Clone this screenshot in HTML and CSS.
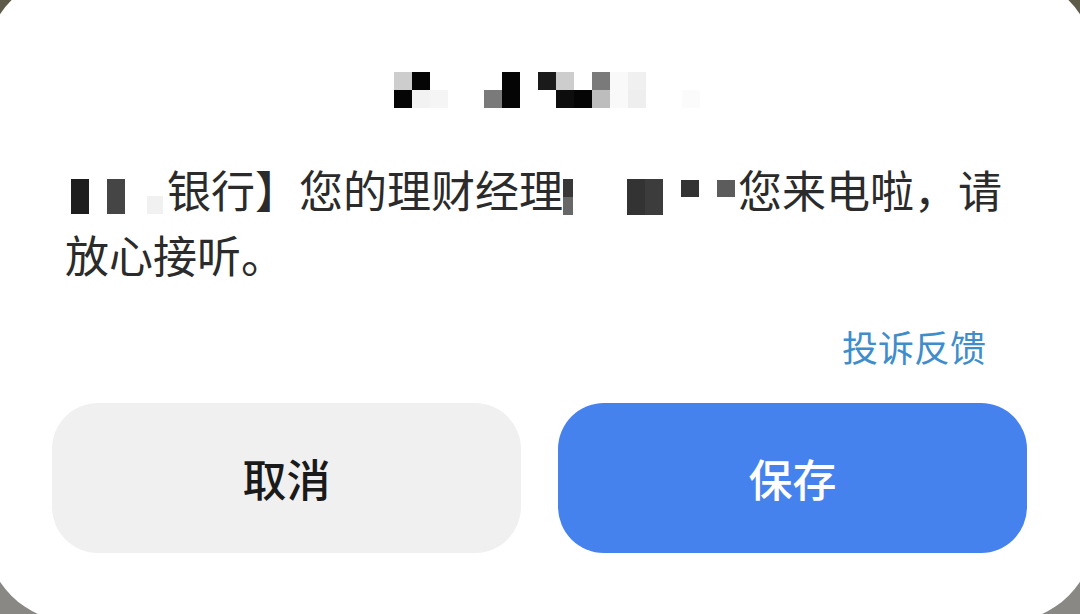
FILE: index.html
```html
<!DOCTYPE html>
<html lang="zh-CN">
<head>
<meta charset="utf-8">
<title>来电提醒</title>
<link rel="stylesheet" href="styles.css">
</head>
<body>
<div class="dialog">
  <div class="title" aria-label="标题（已打码）">
    <span class="px c-ccc"></span><span class="px c-000"></span><span class="px"></span><span class="px"></span><span class="px"></span><span class="px"></span><span class="px c-000"></span><span class="px"></span><span class="px c-1a1"></span><span class="px c-ccc"></span><span class="px"></span><span class="px c-777"></span><span class="px c-f8f"></span><span class="px c-f0f"></span><span class="px"></span><span class="px"></span><span class="px"></span>
    <span class="px c-000"></span><span class="px c-f2f"></span><span class="px c-f4f"></span><span class="px"></span><span class="px"></span><span class="px c-777"></span><span class="px c-000"></span><span class="px"></span><span class="px"></span><span class="px c-0d0"></span><span class="px c-000"></span><span class="px c-bbb"></span><span class="px c-f8f"></span><span class="px c-eee"></span><span class="px"></span><span class="px"></span><span class="px c-fafa"></span>
  </div>

  <p class="message"><span class="mask mask-a"><i class="blk b1"></i><i class="blk b2"></i><i class="blk b3"></i></span>银行】您的理财经理<span class="mask mask-b"><i class="blk b4"></i><i class="blk b5"></i><i class="blk b6"></i><i class="blk b7"></i></span>您来电啦，请放心接听。</p>

  <div class="feedback-row"><a class="feedback" href="#">投诉反馈</a></div>

  <div class="actions">
    <button class="btn btn-cancel" type="button">取消</button>
    <button class="btn btn-save" type="button">保存</button>
  </div>
</div>
</body>
</html>
```

FILE: styles.css
```css
* { box-sizing: border-box; }

html, body {
  margin: 0;
  padding: 0;
  width: 1080px;
  height: 614px;
  overflow: hidden;
}

body {
  background: linear-gradient(to bottom, #5e5a48 0%, #85837f 40%, #8a8885 100%);
  font-family: "Noto Sans CJK SC", "Noto Sans", sans-serif;
}

.dialog {
  width: 1110px;
  height: 648px;
  margin: -26px 0 0 -15px;
  background: #ffffff;
  border-radius: 90px;
  padding: 98px 68px 69px 67px;
  display: flex;
  flex-direction: column;
}

/* pixelated title */
.title {
  display: grid;
  grid-template-columns: repeat(17, 18px);
  grid-template-rows: 18px 18px;
  margin-left: 342px;
  width: 306px;
}
.px { display: block; background: #ffffff; }
.c-000 { background: #050505; }
.c-0d0 { background: #0d0d0d; }
.c-1a1 { background: #1a1a1a; }
.c-777 { background: #7a7a7a; }
.c-bbb { background: #bdbdbd; }
.c-ccc { background: #cdcdcd; }
.c-eee { background: #eeeeee; }
.c-f0f { background: #f0f0f0; }
.c-f2f { background: #f2f2f2; }
.c-f4f { background: #f5f5f5; }
.c-f8f { background: #f9f9f9; }
.c-fafa { background: #fbfbfb; }

/* message */
.message {
  margin: 49px 10px 0 13px;
  font-size: 44px;
  line-height: 65px;
  color: #2b2b2b;
  height: 130px;
}

.mask {
  display: inline-flex;
  align-items: flex-start;
  vertical-align: top;
  margin-top: 22px;
  height: 36px;
}
.mask-a { width: 102px; }
.mask-b { width: 175px; }

.blk { display: block; flex: none; }
.b1 { width: 18px; height: 35px; margin-left: 6px; background: #1e1e1e; }
.b2 { width: 18px; height: 35px; margin-left: 18px; background: #454545; }
.b3 { width: 16px; height: 18px; margin-left: 22px; margin-top: 17px; background: #f1f1f1; }
.b4 { width: 10px; height: 36px; background: linear-gradient(to bottom, #383838 50%, #676767 50%); }
.b5 { width: 36px; height: 36px; margin-left: 54px;
      background: linear-gradient(to right, #333333 50%, #3c3c3c 50%); }
.b6 { width: 18px; height: 17px; margin-left: 18px; margin-top: 1px; background: #333333; }
.b7 { width: 18px; height: 17px; margin-left: 18px; margin-top: 1px; background: #5c5c5c; }

/* feedback link */
.feedback-row {
  display: flex;
  justify-content: flex-end;
  margin-top: 34px;
  padding-right: 41px;
  height: 50px;
}
.feedback {
  font-size: 36px;
  line-height: 50px;
  color: #3f8dcb;
  text-decoration: none;
}

/* buttons */
.actions {
  display: flex;
  gap: 37px;
  margin-top: 32px;
  height: 150px;
}
.btn {
  flex: 1;
  height: 150px;
  border: none;
  border-radius: 46px;
  font-family: "Noto Sans CJK SC", "Noto Sans", sans-serif;
  font-size: 44px;
  font-weight: 500;
  letter-spacing: 0;
  cursor: pointer;
  padding: 0;
}
.btn-cancel {
  background: #f0f0f0;
  color: #1a1a1a;
}
.btn-save {
  background: #4682ee;
  color: #ffffff;
}
```
